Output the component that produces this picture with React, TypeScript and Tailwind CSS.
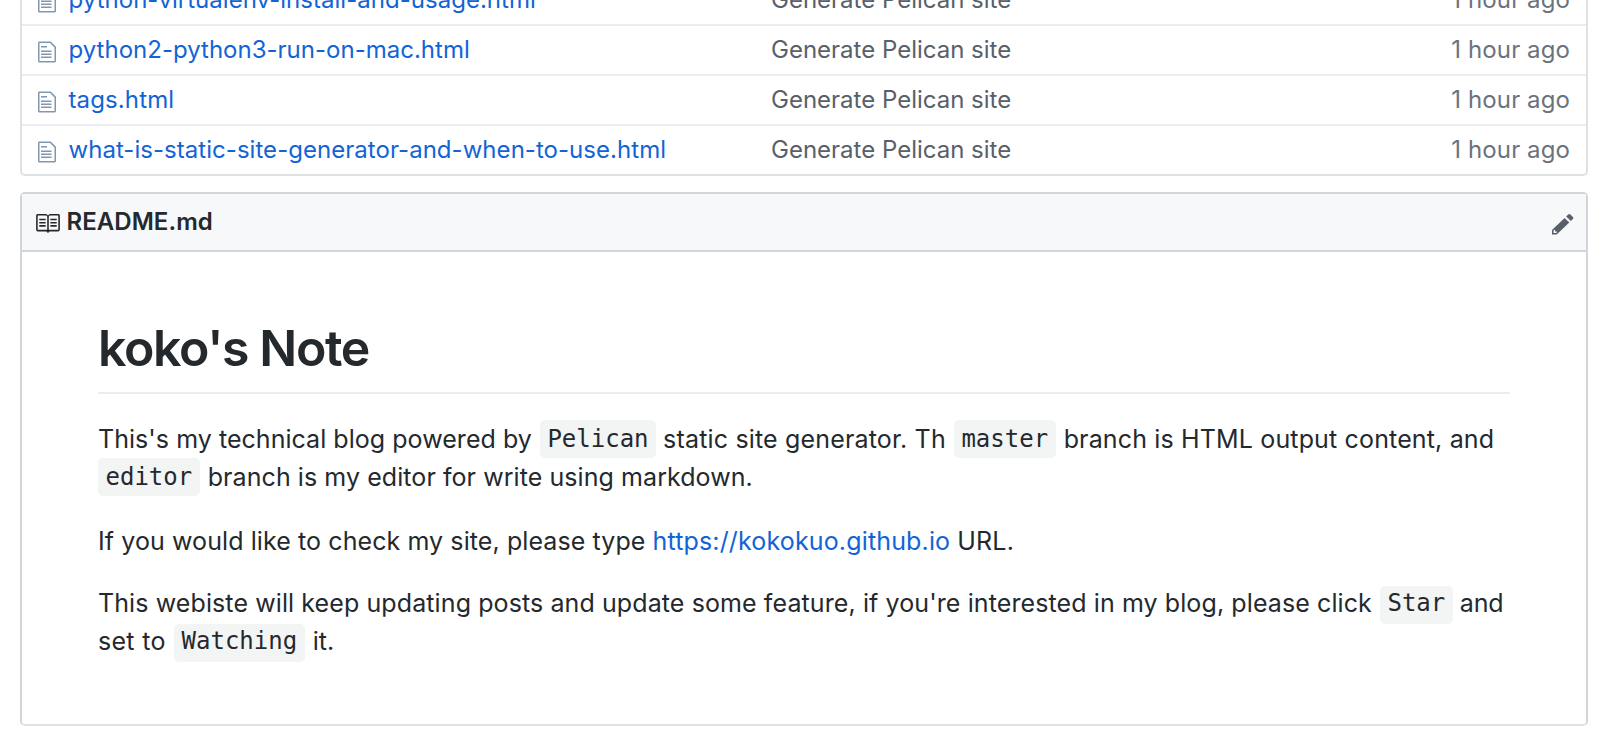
import type { ReactNode } from "react";

const files = [
  { name: "python-virtualenv-install-and-usage.html", spacing: "tracking-[0.03px]" },
  { name: "python2-python3-run-on-mac.html", spacing: "tracking-[0.01px]" },
  { name: "tags.html", spacing: "tracking-[0.12px]" },
  { name: "what-is-static-site-generator-and-when-to-use.html", spacing: "tracking-[0.04px]" },
];

function FileIcon() {
  return (
    <svg className="mt-1 h-6 w-[18px] shrink-0 fill-[#8197b0]" viewBox="0 0 12 16" aria-hidden="true">
      <path d="M6 5H2V4h4v1zM2 8h7V7H2v1zm0 2h7V9H2v1zm0 2h7v-1H2v1zm10-7.5V14c0 .55-.45 1-1 1H1c-.55 0-1-.45-1-1V2c0-.55.45-1 1-1h7.5L12 4.5zM11 5L8 2H1v12h10V5z" />
    </svg>
  );
}

function BookIcon() {
  return (
    <svg className="mt-[3px] h-[19px] w-6 shrink-0 fill-[#24292e]" viewBox="1 2 15 12" aria-hidden="true">
      <path d="M3 5h4v1H3V5zm0 3h4V7H3v1zm0 2h4V9H3v1zm11-5h-4v1h4V5zm0 2h-4v1h4V7zm0 2h-4v1h4V9zm2-6v9c0 .55-.45 1-1 1H9.5l-1 1-1-1H2c-.55 0-1-.45-1-1V3c0-.55.45-1 1-1h5.5l1 1 1-1H15c.55 0 1 .45 1 1zm-8 .5L7.5 3H2v9h6V3.5zm7-.5H9.5l-.5.5V12h6V3z" />
    </svg>
  );
}

function PencilIcon() {
  return (
    <svg className="mt-[3px] h-6 w-[22px] fill-[#586069]" viewBox="0 0 14 16" preserveAspectRatio="none" aria-hidden="true">
      <path d="M0 12v3h3l8-8-3-3-8 8zm3 2H1v-2h1v1h1v1zm10.3-9.3L12 6 9 3l1.3-1.3a.996.996 0 0 1 1.41 0l1.59 1.59c.39.39.39 1.02 0 1.41z" />
    </svg>
  );
}

function Code({ children, low = false }: { children: ReactNode; low?: boolean }) {
  return (
    <code
      className={`mx-[1px] inline-block h-[38px] rounded-[5px] bg-[#f3f4f4] px-[7.5px] align-top font-['DejaVu_Sans_Mono',monospace] text-[24px] ${
        low ? "mt-[2px] -mb-[2px] leading-[35px]" : "leading-[38px]"
      }`}
    >
      {children}
    </code>
  );
}

export default function App() {
  return (
    <div className="flex h-[746px] flex-col overflow-hidden bg-white pr-9 pl-5 font-['Inter',sans-serif] text-[#24292e]">
      <div className="flex h-44 shrink-0 flex-col justify-end overflow-hidden rounded-b-[5px] border-x-2 border-b-2 border-[#dfe2e5] text-2xl leading-[48px]">
        {files.map((file) => (
          <div key={file.name} className="flex h-[50px] shrink-0 items-center border-t-2 border-[#eaecef] pr-4 pl-4 whitespace-nowrap">
            <FileIcon />
            <a className={`ml-[12.5px] h-[49px] w-[702.5px] text-[#1264d6] ${file.spacing}`}>{file.name}</a>
            <span className="h-[49px] flex-1 text-[#586069]">Generate Pelican site</span>
            <span className="h-[49px] tracking-[0.1px] text-[#6a737d]">1 hour ago</span>
          </div>
        ))}
      </div>

      <div className="mt-4 h-[534px] shrink-0 rounded-[5px] border-2 border-[#d1d5da] border-b-[#dfe2e5]">
        <div className="flex h-[58px] items-center border-b-2 border-[#d1d5da] bg-[#f6f8fa] pr-3 pl-[14px]">
          <BookIcon />
          <h3 className="ml-[6.5px] flex-1 text-2xl leading-[56px] font-semibold tracking-[0.05px]">README.md</h3>
          <PencilIcon />
        </div>

        <article className="px-[76px] pt-[65px] text-[25px] leading-[38px] whitespace-nowrap">
          <h1 className="h-[77px] border-b-2 border-[#eaecef] text-[50px] leading-[62px] font-semibold tracking-[-1.35px]">koko's Note</h1>
          <p className="mt-[26px]">
            <span className="tracking-[0.04px]">This's my technical blog powered by</span> <Code>Pelican</Code>{" "}
            <span className="-ml-[1px] tracking-[0.17px]">static site generator. Th</span> <Code>master</Code>{" "}
            <span className="tracking-[0.15px]">branch is HTML output content, and</span>
            <br />
            <span className="-ml-[1px]"><Code>editor</Code></span> <span className="tracking-[0.07px]">branch is my editor for write using markdown.</span>
          </p>
          <p className="mt-[26px]">
            <span className="tracking-[0.09px]">If you would like to check my site, please type</span>{" "}
            <a className="tracking-[0.15px] text-[#1264d6]">https://kokokuo.github.io</a>{" "}
            <span className="tracking-[0.2px]">URL.</span>
          </p>
          <p className="mt-6">
            <span className="tracking-[0.1px]">
              This webiste will keep updating posts and update some feature, if you're interested in my blog, please click
            </span>{" "}
            <Code low>Star</Code> <span className="-ml-[1px] tracking-[-0.2px]">and</span>
            <br />
            <span className="tracking-[0.3px]">set to </span><Code low>Watching</Code> it.
          </p>
        </article>
      </div>
    </div>
  );
}
